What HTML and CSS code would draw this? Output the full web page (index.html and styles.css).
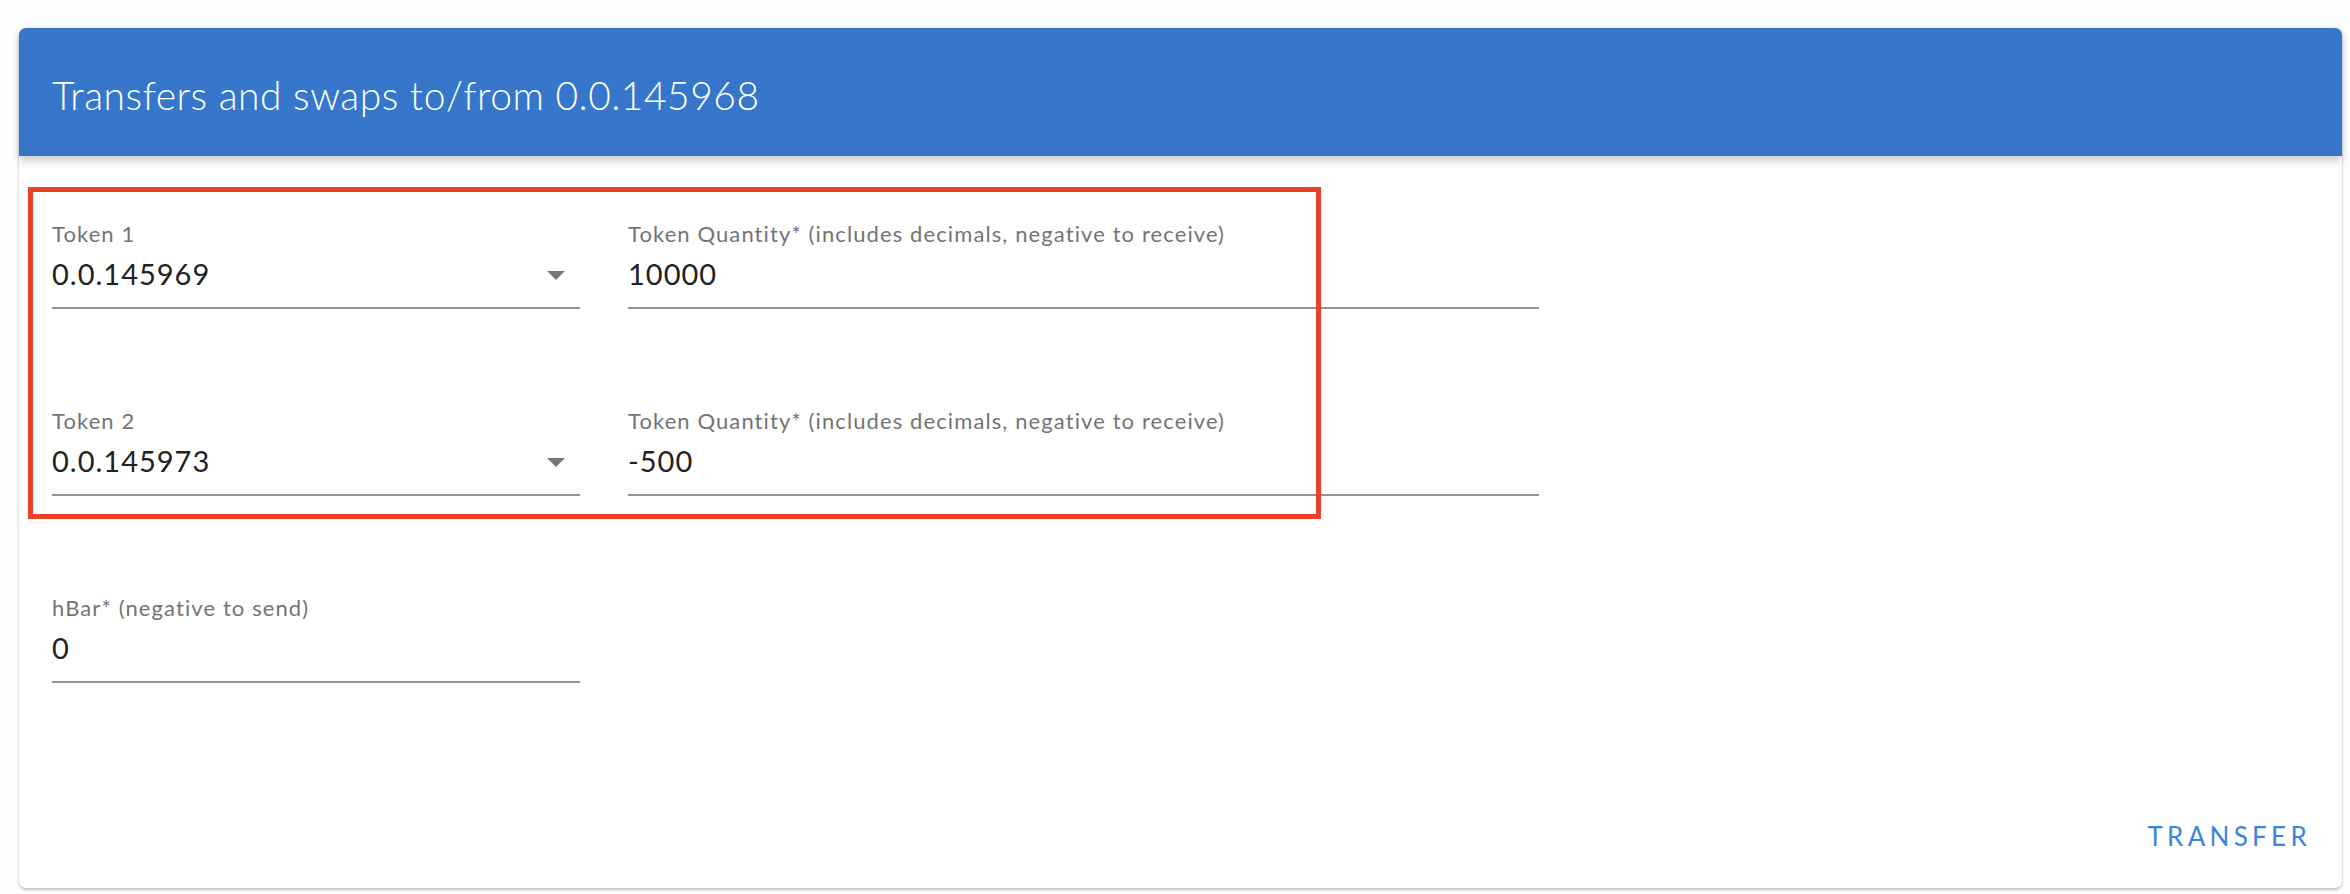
FILE: index.html
```html
<!DOCTYPE html>
<html>
<head>
<meta charset="utf-8">
<link rel="stylesheet" href="styles.css">
</head>
<body>
<div class="card">
  <div class="card-header">
    <h1 class="title">Transfers and swaps to/from 0.0.145968</h1>
  </div>
  <div class="card-body">
    <div class="highlight"></div>
    <div class="row">
      <div class="field field-token">
        <div class="label">Token 1</div>
        <div class="value select">
          <span>0.0.145969</span>
          <span class="arrow"></span>
        </div>
      </div>
      <div class="field field-qty">
        <div class="label">Token Quantity* (includes decimals, negative to receive)</div>
        <div class="value">10000</div>
      </div>
    </div>
    <div class="row">
      <div class="field field-token">
        <div class="label">Token 2</div>
        <div class="value select">
          <span>0.0.145973</span>
          <span class="arrow"></span>
        </div>
      </div>
      <div class="field field-qty">
        <div class="label">Token Quantity* (includes decimals, negative to receive)</div>
        <div class="value">-500</div>
      </div>
    </div>
    <div class="row">
      <div class="field field-token">
        <div class="label">hBar* (negative to send)</div>
        <div class="value">0</div>
      </div>
    </div>
    <div class="actions">
      <button class="btn-text">Transfer</button>
    </div>
  </div>
</div>
</body>
</html>
```

FILE: styles.css
```css
html, body {
  margin: 0;
  padding: 0;
  background: #fdfdfd;
  font-family: Lato, "Open Sans", sans-serif;
}

body {
  padding: 28px 8px 6px 19px;
}

.card {
  background: #ffffff;
  height: 860px;
  border-radius: 7px;
  box-shadow: 0 2px 3px rgba(0,0,0,0.22), 0 0 2px rgba(0,0,0,0.10);
  display: flex;
  flex-direction: column;
}

.card-header {
  height: 128px;
  background: #3677cb;
  border-radius: 7px 7px 0 0;
  display: flex;
  align-items: center;
  padding-left: 33px;
  box-shadow: 0 4px 8px rgba(0,0,0,0.22);
  position: relative;
  z-index: 1;
}

.title {
  margin: 0;
  color: #ffffff;
  font-weight: 300;
  font-size: 39px;
  line-height: 48px;
  letter-spacing: 0.5px;
  padding-top: 6px;
}

.card-body {
  position: relative;
  flex: 1;
  display: flex;
  flex-direction: column;
  padding: 65px 19px 26px 33px;
  gap: 99px;
}

.highlight {
  position: absolute;
  left: 9px;
  top: 31px;
  width: 1283px;
  height: 322px;
  border: 5px solid #ec4128;
  pointer-events: none;
}

.row {
  display: flex;
  gap: 48px;
}

.field {
  display: flex;
  flex-direction: column;
  border-bottom: 2px solid #949494;
  padding-bottom: 15px;
}

.field-token {
  width: 528px;
}

.field-qty {
  width: 911px;
}

.label {
  font-size: 22px;
  line-height: 26px;
  color: #747474;
  font-weight: 400;
  letter-spacing: 1.1px;
  margin-bottom: 9px;
}

.value {
  font-size: 29px;
  line-height: 36px;
  color: #222222;
  letter-spacing: 1px;
}

.select {
  display: flex;
  justify-content: space-between;
  align-items: center;
}

.arrow {
  width: 0;
  height: 0;
  border-left: 9px solid transparent;
  border-right: 9px solid transparent;
  border-top: 9px solid #767676;
  margin-right: 15px;
  margin-top: 2px;
}

.actions {
  margin-top: auto;
  display: flex;
  justify-content: flex-end;
}

.btn-text {
  background: none;
  border: none;
  font-family: Lato, "Open Sans", sans-serif;
  font-size: 26px;
  line-height: 36px;
  letter-spacing: 4.3px;
  text-transform: uppercase;
  color: #3a86dc;
  padding: 8px 12px;
  font-weight: 400;
}
```
